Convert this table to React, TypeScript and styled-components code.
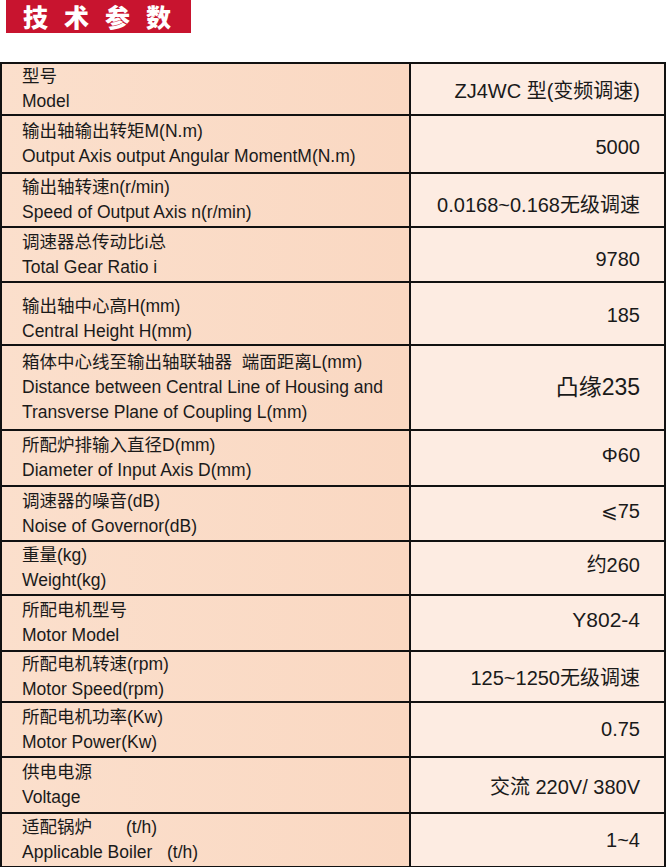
import { FC } from "react";
import styled, { createGlobalStyle } from "styled-components";

// Data
type Spec = {
  cn: string;
  en: string[];
  value: string;
  height: number;
  padTop?: number;
  nudge?: number;
  size?: number;
};

const specs: Spec[] = [
  { cn: "型号", en: ["Model"], value: "ZJ4WC 型(变频调速)", height: 52 },
  { cn: "输出轴输出转矩M(N.m)", en: ["Output Axis output Angular MomentM(N.m)"], value: "5000", height: 58, nudge: 3 },
  { cn: "输出轴转速n(r/min)", en: ["Speed of Output Axis n(r/min)"], value: "0.0168~0.168无级调速", height: 54, nudge: 3 },
  { cn: "调速器总传动比i总", en: ["Total Gear Ratio i"], value: "9780", height: 55, nudge: 5 },
  { cn: "输出轴中心高H(mm)", en: ["Central Height H(mm)"], value: "185", height: 63, padTop: 10, nudge: 2 },
  {
    cn: "箱体中心线至输出轴联轴器  端面距离L(mm)",
    en: ["Distance between Central Line of Housing and", "Transverse Plane of Coupling L(mm)"],
    value: "凸缘235",
    height: 85,
    nudge: -3,
    size: 23,
  },
  { cn: "所配炉排输入直径D(mm)", en: ["Diameter of Input Axis D(mm)"], value: "Φ60", height: 56, nudge: -3 },
  { cn: "调速器的噪音(dB)", en: ["Noise of Governor(dB)"], value: "⩽75", height: 55, nudge: -3 },
  { cn: "重量(kg)", en: ["Weight(kg)"], value: "约260", height: 54, nudge: -5 },
  { cn: "所配电机型号", en: ["Motor Model"], value: "Y802-4", height: 56, nudge: -3, size: 21 },
  { cn: "所配电机转速(rpm)", en: ["Motor Speed(rpm)"], value: "125~1250无级调速", height: 51 },
  { cn: "所配电机功率(Kw)", en: ["Motor Power(Kw)"], value: "0.75", height: 55 },
  { cn: "供电电源", en: ["Voltage"], value: "交流 220V/ 380V", height: 56 },
  { cn: "适配锅炉       (t/h)", en: ["Applicable Boiler   (t/h)"], value: "1~4", height: 52 },
];

// Global
const GlobalStyle = createGlobalStyle`
  html, body {
    margin: 0;
    padding: 0;
    background: #ffffff;
  }
  body {
    font-family: "Liberation Sans", "Noto Sans CJK SC", sans-serif;
    color: #1a1a1a;
  }
`;

// Styled Components
const Page = styled.div`
  width: 666px;
  display: flex;
  flex-direction: column;
`;

const Banner = styled.div`
  margin-left: 6px;
  width: 185px;
  height: 33px;
  background: #c8142f;
  display: flex;
  align-items: center;
  padding-left: 17px;
  box-sizing: border-box;
`;

const BannerText = styled.h1`
  margin: 0;
  font-family: "Noto Sans CJK SC", sans-serif;
  font-weight: 900;
  font-size: 25px;
  letter-spacing: 16px;
  color: #ffffff;
  line-height: 33px;
  white-space: nowrap;
`;

const Table = styled.div`
  margin-top: 29px;
  border: 2px solid #111;
  display: flex;
  flex-direction: column;
`;

const Row = styled.div<{ $h: number; $last: boolean }>`
  display: grid;
  grid-template-columns: 409px 1fr;
  grid-template-rows: 100%;
  height: ${(p) => p.$h}px;
  box-sizing: border-box;
  border-bottom: ${(p) => (p.$last ? "none" : "2px solid #111")};
`;

const LabelCell = styled.div<{ $padTop: number }>`
  background: linear-gradient(90deg, #fbdfcc 0%, #fad8c2 100%);
  border-right: 2px solid #111;
  display: flex;
  flex-direction: column;
  justify-content: center;
  min-height: 0;
  overflow: hidden;
  padding: ${(p) => p.$padTop}px 0 0 20px;
  box-sizing: border-box;
  font-size: 17.5px;
  line-height: 25px;
  white-space: pre;
`;

const LabelLine = styled.div`
  font-family: "Liberation Sans", "Noto Sans CJK SC", sans-serif;
`;

const ValueCell = styled.div<{ $nudge: number; $size: number }>`
  background: #fdece2;
  display: flex;
  align-items: center;
  justify-content: flex-end;
  min-height: 0;
  overflow: hidden;
  padding: ${(p) => Math.max(p.$nudge, 0) * 2}px 24px ${(p) => Math.max(-p.$nudge, 0) * 2}px 0;
  box-sizing: border-box;
  font-size: ${(p) => p.$size}px;
  white-space: pre;
`;

const App: FC = () => {
  return (
    <Page>
      <GlobalStyle />
      <Banner>
        <BannerText>技术参数</BannerText>
      </Banner>
      <Table>
        {specs.map((s, i) => (
          <Row key={s.cn} $h={s.height} $last={i === specs.length - 1}>
            <LabelCell $padTop={s.padTop ?? 0}>
              <LabelLine>{s.cn}</LabelLine>
              {s.en.map((line) => (
                <LabelLine key={line}>{line}</LabelLine>
              ))}
            </LabelCell>
            <ValueCell $nudge={s.nudge ?? 0} $size={s.size ?? 20}>
              {s.value}
            </ValueCell>
          </Row>
        ))}
      </Table>
    </Page>
  );
};

export default App;
